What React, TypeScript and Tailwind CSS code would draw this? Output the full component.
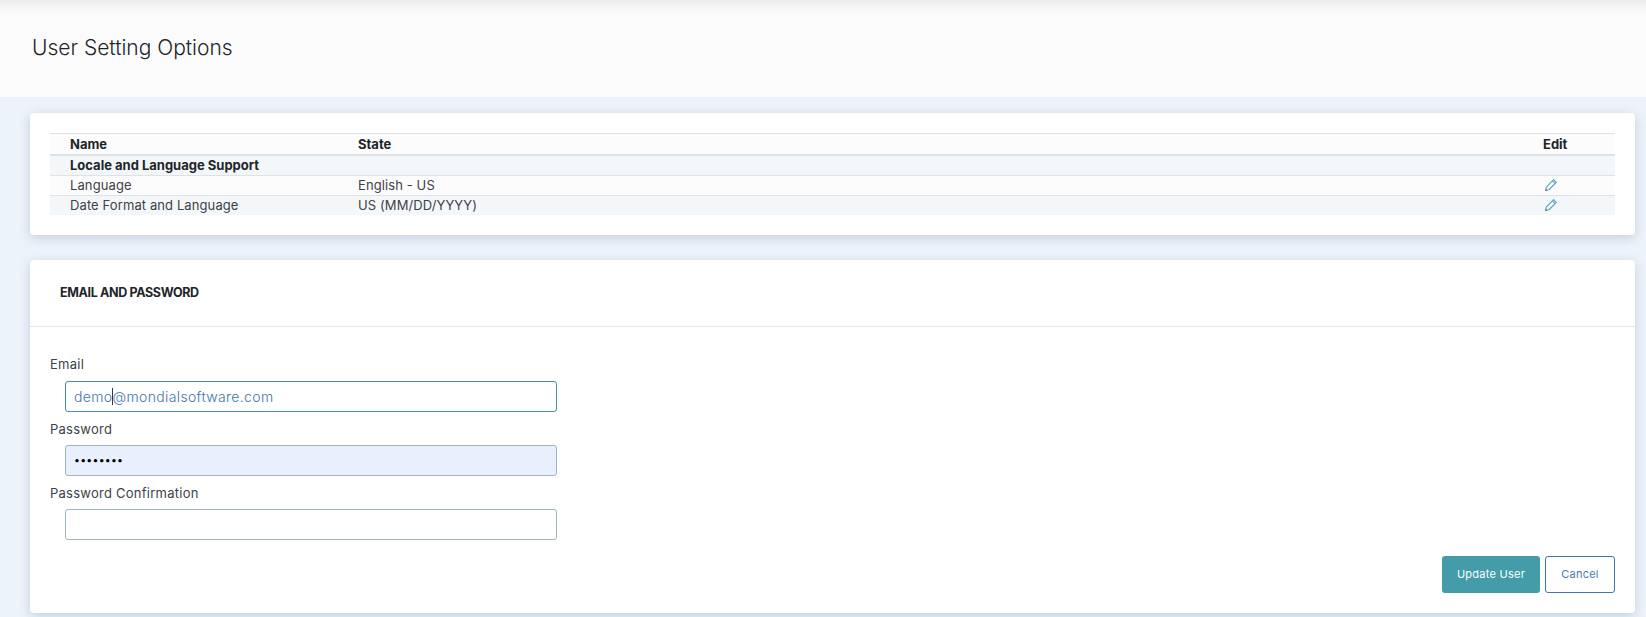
const rows = [
  { name: 'Language', state: 'English - US', rowClass: 'h-[20px] bg-[#fcfcfc] border-b border-[#dee2e6]' },
  { name: 'Date Format and Language', state: 'US (MM/DD/YYYY)', rowClass: 'h-[19px] bg-[#f4f7f9]' },
];

const inputClass =
  'block h-[31px] w-[492px] rounded-[3px] border px-2 outline-none';

// outlined pencil, tip at the bottom left
function EditIcon() {
  return (
    <svg viewBox="0 0 14 14" className="h-[14px] w-[14px]" fill="none" stroke="#5aa9c0" strokeWidth="1.2">
      <path d="M1.5 12.5 L2.5 8.8 L9.6 1.7 L12.3 4.4 L5.2 11.5 Z" strokeLinejoin="round" />
      <path d="M8.4 2.9 L11.1 5.6" />
      <path d="M1.5 12.5 L2.9 12.1" stroke="#8a6f4a" />
    </svg>
  );
}

export default function App() {
  return (
    <div className="h-[617px] overflow-hidden bg-[#edf3fa] font-['Inter',sans-serif] text-[#212529]">
      {/* Page title */}
      <header className="h-[97px] bg-[#fcfcfc] bg-gradient-to-b from-[#ececec] via-[#fbfbfb] via-[14%] to-[#fcfcfc] pl-[32px] pt-[33px]">
        <h1 className="text-[21px] font-light leading-[30px] text-[#212529]">User Setting Options</h1>
      </header>

      <main className="pl-[30px] pr-[11px] pt-[16px]">
        {/* Settings table */}
        <section className="h-[122px] rounded-[4px] bg-white px-[20px] pt-[20px] shadow-[0_3px_12px_rgba(90,110,140,0.28)]">
          <div className="text-[13px] leading-[19px]">
            <div className="flex h-[23px] items-center border-t border-b-2 border-[#dee2e6] bg-[#fcfcfc] pl-[20px] font-bold">
              <span className="w-[288px]">Name</span>
              <span className="flex-1">State</span>
              <span className="w-[72px]">Edit</span>
            </div>
            <div className="flex h-[20px] items-center border-b border-[#dee2e6] bg-[#f4f7f9] pl-[20px] font-bold">
              Locale and Language Support
            </div>
            {rows.map((row) => (
              <div key={row.name} className={`flex items-center pl-[20px] tracking-[0.1px] text-[#3d4248] ${row.rowClass}`}>
                <span className="w-[288px]">{row.name}</span>
                <span className="flex-1">{row.state}</span>
                <span className="w-[72px] -translate-y-[1px] pl-[1px]">
                  <EditIcon />
                </span>
              </div>
            ))}
          </div>
        </section>

        {/* Email and password form */}
        <section className="mt-[25px] h-[353px] rounded-[4px] bg-white shadow-[0_3px_12px_rgba(90,110,140,0.28)]">
          <div className="flex h-[67px] items-center border-b border-[#e4e7eb] pl-[30px]">
            <h2 className="pt-[1px] text-[12.5px] font-bold tracking-[-0.35px] text-[#212529]">EMAIL AND PASSWORD</h2>
          </div>
          <form className="relative px-[20px] pt-[27px] text-[13px] tracking-[0.25px] text-[#3d4248]">
            <label className="block h-[27px] leading-[20px]">Email</label>
            <div className="relative ml-[15px] h-[31px] w-[492px]">
              <input
                readOnly
                value="demo@mondialsoftware.com"
                className={`${inputClass} border-[#46909b] bg-white text-[14px] font-light tracking-[0.36px] text-[#3f74ad]`}
              />
              <span className="absolute left-[47px] top-[7px] h-[17px] w-px bg-[#2b3a4a]" />
            </div>
            <label className="mt-[7px] block h-[26px] leading-[20px]">Password</label>
            <input
              readOnly
              type="password"
              value="password"
              className={`${inputClass} ml-[15px] border-[#9db5bd] bg-[#e8f0fe] text-[10.5px] text-black`}
            />
            <label className="mt-[7px] block h-[26px] leading-[20px]">Password Confirmation</label>
            <input readOnly className={`${inputClass} ml-[15px] border-[#9db5bd] bg-white`} />
            <div className="mt-[16px] flex justify-end gap-[5px]">
              <button
                type="button"
                className="h-[37px] w-[98px] rounded-[3px] bg-[#439ca8] text-[11px] text-white"
              >
                Update User
              </button>
              <button
                type="button"
                className="h-[37px] w-[70px] rounded-[3px] border border-[#3f74ad] bg-white text-[11px] text-[#4a7ab0]"
              >
                Cancel
              </button>
            </div>
          </form>
        </section>
      </main>
    </div>
  );
}
